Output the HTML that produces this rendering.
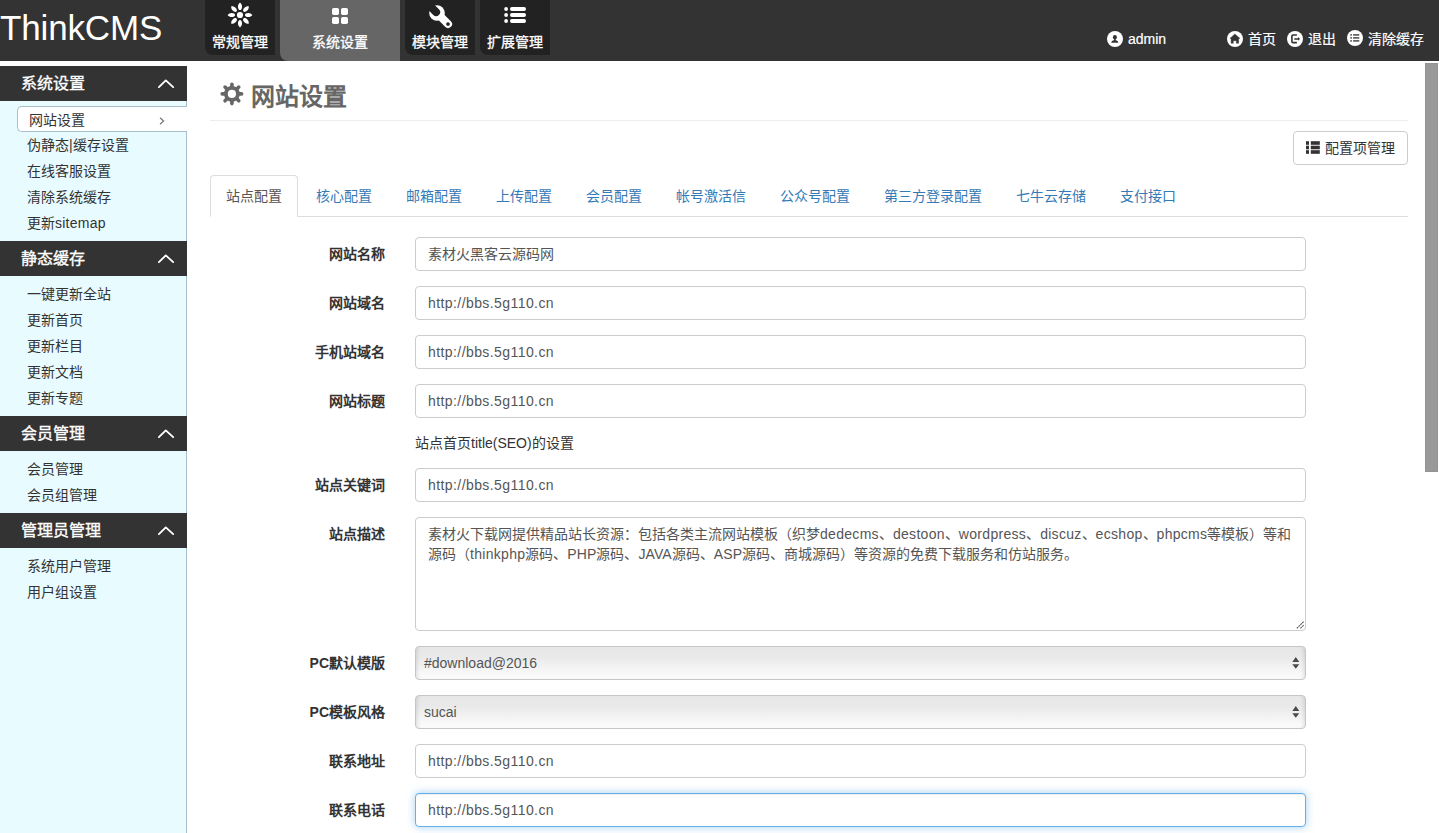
<!DOCTYPE html>
<html lang="zh-CN"><head><meta charset="utf-8">
<style>
*{box-sizing:border-box;margin:0;padding:0}
html,body{width:1439px;height:833px;overflow:hidden;background:#fff}
body{font-family:"Liberation Sans",sans-serif;font-size:14px;color:#333;position:relative}
.abs{position:absolute}
svg{overflow:visible}
#hdr{position:absolute;left:0;top:0;width:1439px;height:61px;background:#333}
#logo{position:absolute;left:0;top:7px;font-size:35px;color:#fff;line-height:41px;letter-spacing:-0.15px}
.nt{position:absolute;top:0;height:55px;width:70px;background:#222;border-bottom-left-radius:8px;color:#fff;text-align:center}
.nt.act{background:#666;height:61px;width:120px}
.nt .ic{position:absolute;left:0;right:0;top:3px;height:24px}
.nt .tx{position:absolute;left:0;right:0;top:34px;line-height:16px;font-size:14px;-webkit-text-stroke:0.3px #fff}
.hr{position:absolute;top:31px;color:#fff;font-size:14px;line-height:16px;-webkit-text-stroke:0.2px #fff}
#side{position:absolute;left:0;top:66px;width:187px;height:767px;background:#e8fbff;border-right:1px solid #a8c0cc}
.sh{position:absolute;left:0;width:187px;height:35px;background:#333;color:#fff;font-size:16px}
.sh .t{position:absolute;left:21px;top:9px;line-height:18px;-webkit-text-stroke:0.35px #fff}
.sh svg{position:absolute;left:157px;top:13px}
.si{position:absolute;left:27px;line-height:16px;font-size:14px;color:#333}
#actitem{position:absolute;left:17px;top:106px;width:170px;height:26px;background:#fff;border:1px solid #a8c0cc;border-right:none;border-radius:5px 0 0 5px}
.lbl{position:absolute;right:1054px;font-weight:bold;color:#333;line-height:16px;white-space:nowrap}
.inp{position:absolute;left:415px;width:891px;height:34px;border:1px solid #ccc;border-radius:4px;background:#fff;color:#555}
.inp .v{position:absolute;left:12px;top:8px;line-height:16px;white-space:nowrap}
.lat{letter-spacing:0.42px}
.sel{background:linear-gradient(#e7e7e7,#e9e9e9 30%,#fafafa 90%);border-color:#c6c6c6;box-shadow:inset 5px 0 4px -4px rgba(0,0,0,.12),inset -5px 0 4px -4px rgba(0,0,0,.12)}
.tab{position:absolute;top:188px;line-height:16px;color:#337ab7;white-space:nowrap}
</style></head>
<body>
<div id="hdr">
  <div id="logo">ThinkCMS</div>
  <div class="nt" style="left:205px">
    <svg class="ic" viewBox="0 0 70 24" width="70" height="24">
      <g fill="#fff" transform="translate(35,12)">
        <circle r="3.1"/>
        <g id="pet"><path d="M0,-12.4 C1.4,-11.4 2.1,-9.6 2.05,-8.3 C2,-6.4 1.2,-4.9 0,-4.9 C-1.2,-4.9 -2,-6.4 -2.05,-8.3 C-2.1,-9.6 -1.4,-11.4 0,-12.4Z"/></g>
        <use href="#pet" transform="rotate(45)"/><use href="#pet" transform="rotate(90)"/><use href="#pet" transform="rotate(135)"/>
        <use href="#pet" transform="rotate(180)"/><use href="#pet" transform="rotate(225)"/><use href="#pet" transform="rotate(270)"/><use href="#pet" transform="rotate(315)"/>
      </g>
    </svg>
    <div class="tx">常规管理</div>
  </div>
  <div class="nt act" style="left:280px">
    <svg class="ic" viewBox="0 0 120 24" width="120" height="24">
      <g fill="#fff"><rect x="52" y="5" width="7" height="7" rx="1.8"/><rect x="61" y="5" width="7" height="7" rx="1.8"/><rect x="52" y="14" width="7" height="7" rx="1.8"/><rect x="61" y="14" width="7" height="7" rx="1.8"/></g>
    </svg>
    <div class="tx">系统设置</div>
  </div>
  <div class="nt" style="left:405px">
    <svg class="ic" viewBox="0 0 70 24" width="70" height="24">
      <g transform="translate(-405,-3)"><circle cx="437" cy="13" r="7.8" fill="#fff"/><line x1="437" y1="13" x2="448" y2="24" stroke="#fff" stroke-width="8.1" stroke-linecap="round"/><line x1="436.1" y1="12.1" x2="424" y2="0" stroke="#222" stroke-width="8" stroke-linecap="round"/><circle cx="448" cy="24" r="1.85" fill="#222"/></g>
    </svg>
    <div class="tx">模块管理</div>
  </div>
  <div class="nt" style="left:480px">
    <svg class="ic" viewBox="0 0 70 24" width="70" height="24">
      <g fill="#fff"><circle cx="26.1" cy="6" r="1.9"/><circle cx="26.1" cy="12" r="1.9"/><circle cx="26.1" cy="18" r="1.9"/><rect x="30" y="4.1" width="16" height="3.8" rx="1.9"/><rect x="30" y="10.1" width="16" height="3.8" rx="1.9"/><rect x="30" y="16.1" width="16" height="3.8" rx="1.9"/></g>
    </svg>
    <div class="tx">扩展管理</div>
  </div>
  <!-- right -->
  <svg class="abs" style="left:1107px;top:31px" width="16" height="16" viewBox="0 0 16 16"><circle cx="8" cy="8" r="8" fill="#fff"/><ellipse cx="7.9" cy="6.2" rx="2" ry="2.3" fill="#333"/><path d="M7.2,8 L8.6,8 L8.7,9.3 C10,9.6 11.3,10.1 11.3,11.8 L4.3,11.8 C4.3,10.1 5.6,9.6 7,9.3Z" fill="#333"/></svg>
  <div class="hr" style="left:1128px">admin</div>
  <svg class="abs" style="left:1227px;top:31px" width="16" height="16" viewBox="0 0 16 16"><circle cx="8" cy="8" r="8" fill="#fff"/><path d="M7.9,2.9 L13,7.4 L11.6,7.4 L11.6,12.3 L9.4,12.3 L9.4,9.7 L6.3,9.7 L6.3,12.3 L4.1,12.3 L4.1,7.4 L2.9,7.4Z" fill="#333" stroke="#333" stroke-width="0.4" stroke-linejoin="round"/></svg>
  <div class="hr" style="left:1248px">首页</div>
  <svg class="abs" style="left:1287px;top:31px" width="16" height="16" viewBox="0 0 16 16"><circle cx="8" cy="8" r="8" fill="#fff"/><path d="M9.9,4 L6,4 Q4.9,4 4.9,5.1 L4.9,10.5 Q4.9,11.6 6,11.6 L9.9,11.6" fill="none" stroke="#333" stroke-width="1.6"/><path d="M7.3,7.2 L11,7.2 L11,6.1 L13,7.9 L11,9.8 L11,8.7 L7.3,8.7Z" fill="#333"/></svg>
  <div class="hr" style="left:1308px">退出</div>
  <svg class="abs" style="left:1347px;top:30px" width="16" height="16" viewBox="0 0 16 16"><circle cx="8" cy="8" r="8" fill="#fff"/><g fill="#555" transform="translate(0,1)"><rect x="3.3" y="3.1" width="1.6" height="1.6"/><rect x="3.3" y="6.1" width="1.6" height="1.6"/><rect x="3.3" y="9.1" width="1.6" height="1.6"/><rect x="6.1" y="3.1" width="6.2" height="1.6"/><rect x="6.1" y="6.1" width="6.2" height="1.6"/><rect x="6.1" y="9.1" width="6.2" height="1.6"/></g></svg>
  <div class="hr" style="left:1368px">清除缓存</div>
</div>

<div id="side">
</div>
<div class="sh" style="top:66px"><span class="t">系统设置</span><svg width="17" height="10" viewBox="0 0 17 10"><path d="M1.9,8.1 L8.8,1.4 L16.2,8.1" fill="none" stroke="#fff" stroke-width="1.9" stroke-linecap="round" stroke-linejoin="round"/></svg></div>
<div id="actitem"></div>
<svg class="abs" style="left:159px;top:117px" width="6" height="8" viewBox="0 0 6 8"><path d="M1,0.7 L4.6,4 L1,7.3" fill="none" stroke="#777" stroke-width="1.2"/></svg>
<div class="si" style="top:112px;left:29px">网站设置</div>
<div class="si" style="top:137px">伪静态|缓存设置</div>
<div class="si" style="top:163px">在线客服设置</div>
<div class="si" style="top:189px">清除系统缓存</div>
<div class="si" style="top:215px">更新<span style="letter-spacing:0.25px">sitemap</span></div>
<div class="sh" style="top:241px"><span class="t">静态缓存</span><svg width="17" height="10" viewBox="0 0 17 10"><path d="M1.9,8.1 L8.8,1.4 L16.2,8.1" fill="none" stroke="#fff" stroke-width="1.9" stroke-linecap="round" stroke-linejoin="round"/></svg></div>
<div class="si" style="top:286px">一键更新全站</div>
<div class="si" style="top:312px">更新首页</div>
<div class="si" style="top:338px">更新栏目</div>
<div class="si" style="top:364px">更新文档</div>
<div class="si" style="top:390px">更新专题</div>
<div class="sh" style="top:416px"><span class="t">会员管理</span><svg width="17" height="10" viewBox="0 0 17 10"><path d="M1.9,8.1 L8.8,1.4 L16.2,8.1" fill="none" stroke="#fff" stroke-width="1.9" stroke-linecap="round" stroke-linejoin="round"/></svg></div>
<div class="si" style="top:461px">会员管理</div>
<div class="si" style="top:487px">会员组管理</div>
<div class="sh" style="top:513px"><span class="t">管理员管理</span><svg width="17" height="10" viewBox="0 0 17 10"><path d="M1.9,8.1 L8.8,1.4 L16.2,8.1" fill="none" stroke="#fff" stroke-width="1.9" stroke-linecap="round" stroke-linejoin="round"/></svg></div>
<div class="si" style="top:558px">系统用户管理</div>
<div class="si" style="top:584px">用户组设置</div>

<!-- content -->
<svg class="abs" style="left:0;top:0" width="1" height="1"><g transform="translate(231.9,93.9)" fill="#666" stroke="#666"><g stroke-width="3.6" stroke-linecap="round"><line x1="0" y1="-7" x2="0" y2="-9.7"/><line x1="0" y1="-7" x2="0" y2="-9.7" transform="rotate(45)"/><line x1="0" y1="-7" x2="0" y2="-9.7" transform="rotate(90)"/><line x1="0" y1="-7" x2="0" y2="-9.7" transform="rotate(135)"/><line x1="0" y1="-7" x2="0" y2="-9.7" transform="rotate(180)"/><line x1="0" y1="-7" x2="0" y2="-9.7" transform="rotate(225)"/><line x1="0" y1="-7" x2="0" y2="-9.7" transform="rotate(270)"/><line x1="0" y1="-7" x2="0" y2="-9.7" transform="rotate(315)"/></g><circle r="7.9" stroke="none"/><circle r="4.1" fill="#fff" stroke="none"/></g></svg>
<div class="abs" style="left:251px;top:84px;font-size:24px;line-height:26px;color:#666;font-weight:bold">网站设置</div>
<div class="abs" style="left:210px;top:120px;width:1198px;height:1px;background:#eee"></div>

<div class="abs" style="left:1293px;top:131px;width:115px;height:34px;border:1px solid #ccc;border-radius:4px;background:#fff"></div>
<svg class="abs" style="left:1306px;top:141px" width="14" height="13" viewBox="0 0 14 13"><g fill="#333"><rect x="0" y="0.2" width="3" height="3.6"/><rect x="0" y="4.7" width="3" height="3.6"/><rect x="0" y="9.2" width="3" height="3.6"/><rect x="4.8" y="0.2" width="9" height="3.6"/><rect x="4.8" y="4.7" width="9" height="3.6"/><rect x="4.8" y="9.2" width="9" height="3.6"/></g></svg>
<div class="abs" style="left:1325px;top:140px;line-height:16px;color:#333">配置项管理</div>

<!-- tabs -->
<div class="abs" style="left:210px;top:216px;width:1198px;height:1px;background:#ddd"></div>
<div class="abs" style="left:210px;top:175px;width:88px;height:42px;border:1px solid #ddd;border-bottom-color:#fff;border-radius:4px 4px 0 0;background:#fff"></div>
<div class="tab" style="left:226px;color:#555">站点配置</div>
<div class="tab" style="left:316px">核心配置</div>
<div class="tab" style="left:406px">邮箱配置</div>
<div class="tab" style="left:496px">上传配置</div>
<div class="tab" style="left:586px">会员配置</div>
<div class="tab" style="left:676px">帐号激活信</div>
<div class="tab" style="left:780px">公众号配置</div>
<div class="tab" style="left:884px">第三方登录配置</div>
<div class="tab" style="left:1016px">七牛云存储</div>
<div class="tab" style="left:1120px">支付接口</div>

<!-- form -->
<div class="lbl" style="top:246px">网站名称</div>
<div class="inp" style="top:237px"><span class="v">素材火黑客云源码网</span></div>
<div class="lbl" style="top:295px">网站域名</div>
<div class="inp" style="top:286px"><span class="v lat">http://bbs.5g110.cn</span></div>
<div class="lbl" style="top:344px">手机站域名</div>
<div class="inp" style="top:335px"><span class="v lat">http://bbs.5g110.cn</span></div>
<div class="lbl" style="top:393px">网站标题</div>
<div class="inp" style="top:384px"><span class="v lat">http://bbs.5g110.cn</span></div>
<div class="abs" style="left:415px;top:435px;line-height:16px;color:#333">站点首页title(SEO)的设置</div>
<div class="lbl" style="top:477px">站点关键词</div>
<div class="inp" style="top:468px"><span class="v lat">http://bbs.5g110.cn</span></div>
<div class="lbl" style="top:526px">站点描述</div>
<div class="inp" style="top:517px;height:114px"><div class="v" style="line-height:20px;top:6px">素材火下载网提供精品站长资源：包括各类主流网站模板（织梦<span style="letter-spacing:0.3px">dedecms</span>、<span style="letter-spacing:0.3px">destoon</span>、<span style="letter-spacing:0.3px">wordpress</span>、<span style="letter-spacing:0.3px">discuz</span>、<span style="letter-spacing:0.3px">ecshop</span>、<span style="letter-spacing:0.3px">phpcms</span>等模板）等和<br>源码（<span style="letter-spacing:0.3px">thinkphp</span>源码、<span style="letter-spacing:0.1px">PHP</span>源码、<span style="letter-spacing:0.1px">JAVA</span>源码、<span style="letter-spacing:0.1px">ASP</span>源码、商城源码）等资源的免费下载服务和仿站服务。</div>
  <svg class="abs" style="right:1px;bottom:1px" width="8" height="8" viewBox="0 0 8 8"><path d="M7.6,0.6 L0.8,7.4 M7.6,4.2 L4.4,7.4" stroke="#555" stroke-width="1.1" stroke-dasharray="2 0.6"/></svg>
</div>
<div class="lbl" style="top:655px">PC默认模版</div>
<div class="inp sel" style="top:646px"><span class="v" style="left:8px">#download@2016</span>
  <svg class="abs" style="left:876px;top:10px" width="8" height="14" viewBox="0 0 8 14"><path d="M3.8,0.1 L7.3,4.9 L0.3,4.9Z M0.3,7.3 L7.3,7.3 L3.8,11.8Z" fill="#4a4a4a"/></svg></div>
<div class="lbl" style="top:704px">PC模板风格</div>
<div class="inp sel" style="top:695px"><span class="v" style="left:8px">sucai</span>
  <svg class="abs" style="left:876px;top:10px" width="8" height="14" viewBox="0 0 8 14"><path d="M3.8,0.1 L7.3,4.9 L0.3,4.9Z M0.3,7.3 L7.3,7.3 L3.8,11.8Z" fill="#4a4a4a"/></svg></div>
<div class="lbl" style="top:753px">联系地址</div>
<div class="inp" style="top:744px"><span class="v lat">http://bbs.5g110.cn</span></div>
<div class="lbl" style="top:802px">联系电话</div>
<div class="inp" style="top:793px;border-color:#66afe9;box-shadow:inset 0 1px 1px rgba(0,0,0,.075),0 0 8px rgba(102,175,233,.6)"><span class="v lat">http://bbs.5g110.cn</span></div>

<!-- scrollbar -->
<div class="abs" style="left:1425px;top:63px;width:13px;height:409px;background:#999;border:1px solid #939393"></div>
</body></html>
